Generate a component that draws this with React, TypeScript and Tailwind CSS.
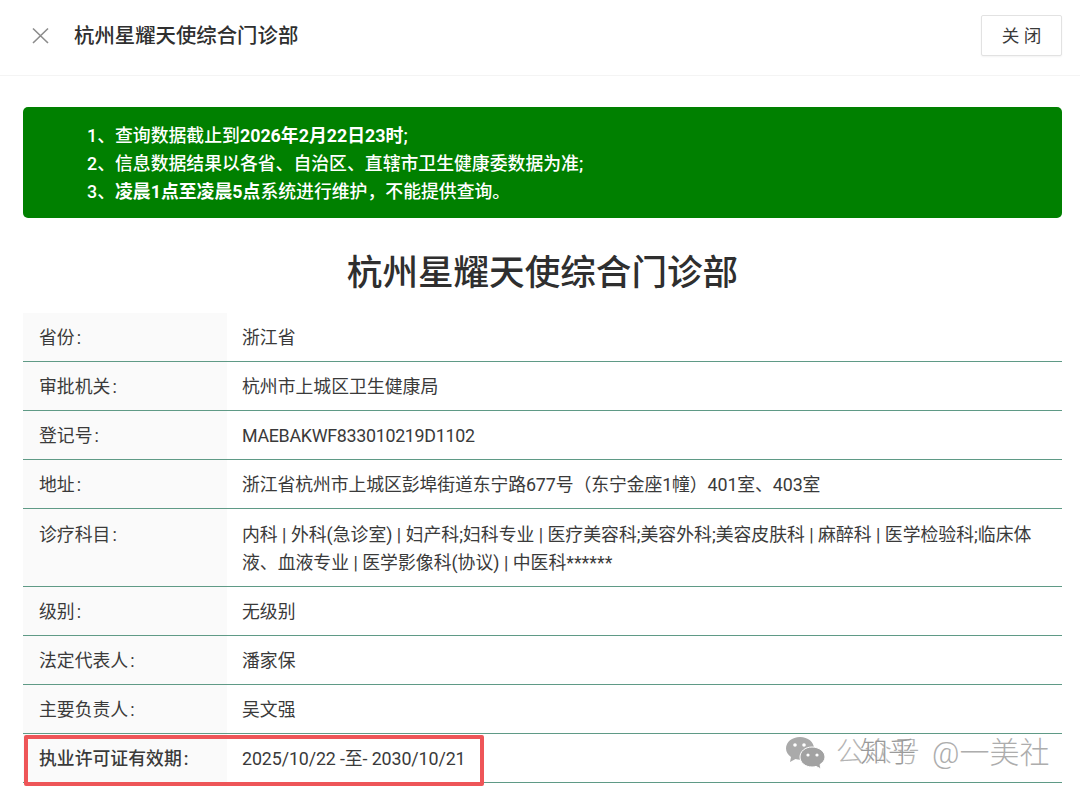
import React from "react";

const rows = [
  { label: "省份", value: "浙江省" },
  { label: "审批机关", value: "杭州市上城区卫生健康局" },
  { label: "登记号", value: "MAEBAKWF833010219D1102", fit: "tracking-[-0.3px]" },
  { label: "地址", value: "浙江省杭州市上城区彭埠街道东宁路677号（东宁金座1幢）401室、403室", fit: "tracking-[-0.1px]" },
  {
    label: "诊疗科目",
    value: "内科 | 外科(急诊室) | 妇产科;妇科专业 | 医疗美容科;美容外科;美容皮肤科 | 麻醉科 | 医学检验科;临床体液、血液专业 | 医学影像科(协议) | 中医科******",
    tall: true,
  },
  { label: "级别", value: "无级别" },
  { label: "法定代表人", value: "潘家保" },
  { label: "主要负责人", value: "吴文强" },
];

const Colon = () => <span className="pl-[2px]">:</span>;

const Row = ({ label, value, tall, fit }: { label: string; value: string; tall?: boolean; fit?: string }) => (
  <div className="flex border-b border-[#5f9a86]">
    <div className={`w-[204px] shrink-0 bg-[#fafafa] pl-[16px] pr-2 ${tall ? "pt-[12px] pb-[9px]" : "pt-[11px] pb-[9px]"}`}>
      {label}
      <Colon />
    </div>
    <div className={`flex-1 pl-[15px] pr-6 ${tall ? "pt-[12px] pb-[9px]" : "pt-[11px] pb-[9px]"} ${fit ?? ""}`}>{value}</div>
  </div>
);

const App = () => {
  return (
    <div
      className="relative w-[1080px] h-[797px] overflow-hidden bg-white text-[17.85px] leading-[28px] text-[#3a3a3a]"
      style={{ fontFamily: 'Roboto, "Noto Sans CJK SC", sans-serif' }}
    >
      {/* header */}
      <div className="flex items-center h-[76px] pl-[32px] pr-[18px] pb-[4px] border-b border-[#f4f4f4]">
        <svg width="17" height="17" viewBox="0 0 17 17" className="shrink-0" fill="none" stroke="#8c8c8c" strokeWidth="1.6">
          <path d="M1 1.5 L16 16 M16 1.5 L1 16" />
        </svg>
        <div className="ml-[25px] text-[20.4px] font-medium text-[#2f2f2f]">杭州星耀天使综合门诊部</div>
        <button className="ml-auto w-[81px] h-[41px] bg-white border border-[#e2e2e2] rounded-[2px] text-[17.6px] text-[#3a3a3a] shadow-[0_1px_2px_rgba(0,0,0,0.05)]">
          关&nbsp;闭
        </button>
      </div>

      <div className="pl-[23px] pr-[18px] pt-[31px]">
        {/* notice */}
        <div className="bg-[#008000] rounded-[5px] h-[111px] pl-[64px] py-[15px] text-white">
          <div className="font-medium">1、查询数据截止到<b>2026年2月22日23时</b>;</div>
          <div className="font-medium">2、信息数据结果以各省、自治区、直辖市卫生健康委数据为准;</div>
          <div className="font-medium">3、<b>凌晨1点至凌晨5点</b>系统进行维护，不能提供查询。</div>
        </div>

        <h1 className="text-center text-[35.6px] leading-[50px] font-medium text-[#2f2f2f] mt-[30px] mb-[15px]">
          杭州星耀天使综合门诊部
        </h1>

        <div>
          {rows.map((r) => (
            <Row key={r.label} label={r.label} value={r.value} tall={r.tall} fit={r.fit} />
          ))}
          <div className="relative flex border-b border-[#5f9a86]">
            <div className="w-[204px] shrink-0 bg-[#fafafa] pl-[16px] pr-2 pt-[11px] pb-[9px] font-medium">
              执业许可证有效期
              <Colon />
            </div>
            <div className="flex-1 pl-[15px] pr-6 pt-[11px] pb-[9px] tracking-[-0.12px]">2025/10/22 -至- 2030/10/21</div>
            <div className="absolute left-[1px] top-[1px] w-[460px] h-[51px] border-[4px] border-[#ee5558] rounded-[2px]" />
          </div>
        </div>
      </div>

      {/* watermark */}
      <div className="absolute left-[785px] top-[735px] flex items-center h-[36px]">
        <svg width="41" height="34" viewBox="0 0 41 34" className="shrink-0">
          <path d="M15 1C7 1 1 6 1 12.500C1 16 3 19 6 21L5 26L10.500 23C12 23.500 13.500 23.700 15 23.700C23 23.700 29 18.500 29 12.300C29 6 23 1 15 1Z" fill="#aaaaaa" />
          <path d="M27 11C20 11 15 15.500 15 21C15 26.500 20 31 27 31C28.500 31 29.800 30.800 31 30.400L36 33L35 28.600C38 26.500 40 24 40 21C40 15.500 34 11 27 11Z" fill="#a2a2a2" stroke="#ffffff" strokeWidth="1" />
          <circle cx="10" cy="9" r="1.800" fill="#ffffff" />
          <circle cx="19" cy="9" r="1.800" fill="#ffffff" />
          <circle cx="23" cy="19" r="1.600" fill="#ffffff" />
          <circle cx="32" cy="19" r="1.600" fill="#ffffff" />
        </svg>
        <div className="relative ml-[10px] w-[220px] h-[36px] text-[28px] leading-[36px] font-light text-[#b4b4b4] whitespace-nowrap [text-shadow:1px_1px_0_#ffffff]">
          <span className="absolute left-0 top-0">公众号</span>
          <span className="absolute left-[24px] top-0 text-[#9a9a9a]">知乎</span>
          <span className="absolute left-[96px] top-0 text-[30px] text-[#adadad]">@一美社</span>
        </div>
      </div>
    </div>
  );
};

export default App;
